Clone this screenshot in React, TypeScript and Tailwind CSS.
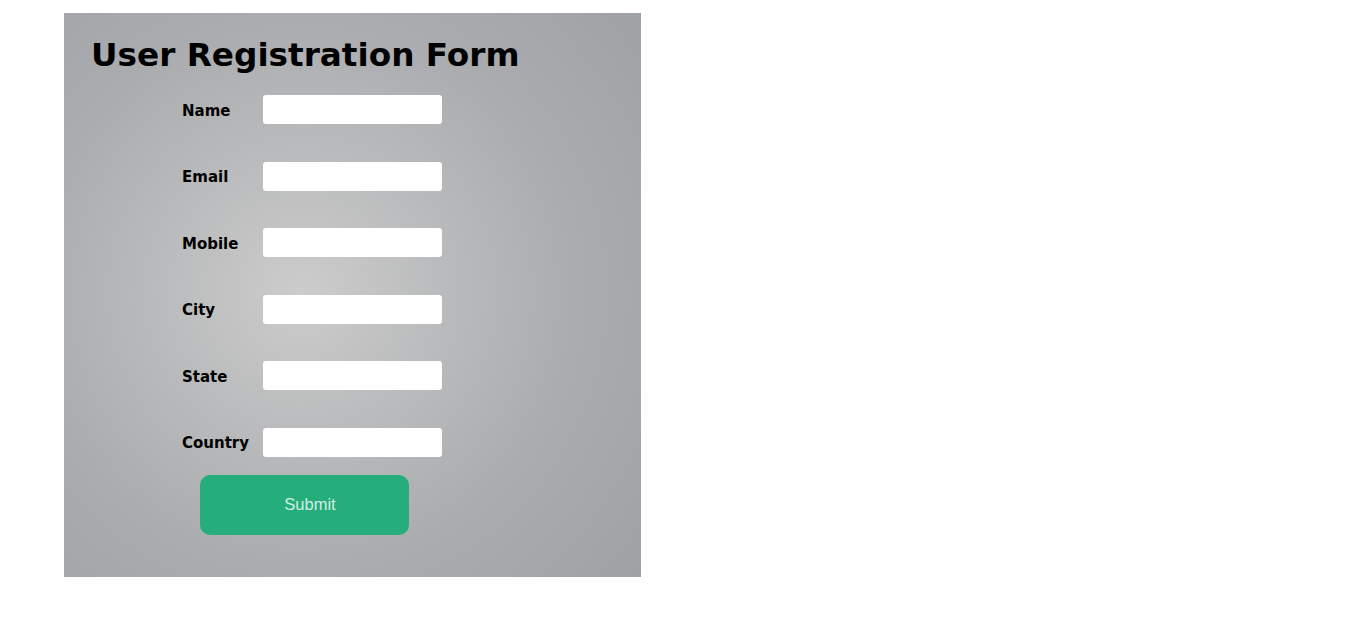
export default function App() {
  const fields = ["Name", "Email", "Mobile", "City", "State", "Country"];
  return (
    <div className="w-[1354px] h-[623px] bg-white pl-[64px] pt-[13px]">
      <div
        className="w-[577px] h-[564px] bg-[radial-gradient(circle_at_238px_280px,#cccccc_0%,#bbbcbd_30%,#aaacaf_62%,#9fa2a5_100%)]"
        style={{ fontFamily: '"DejaVu Sans", sans-serif' }}
      >
        <h1 className="pl-[27px] pt-[20px] text-[32.7px] leading-[44px] font-bold text-black">
          User Registration Form
        </h1>
        <div className="pl-[118px] pt-[18px] flex flex-col gap-[37.5px]">
          {fields.map((f) => (
            <div key={f} className="flex items-center h-[29px]">
              <span className="w-[81px] pt-[3px] text-[15px] font-bold text-black">{f}</span>
              <input className="w-[179px] h-[29px] bg-white rounded-[3px] outline-none" />
            </div>
          ))}
        </div>
        <div className="pl-[136px] pt-[18px]">
          <button
            className="w-[209px] h-[60px] rounded-[10px] bg-[#25ad7b] text-[#d3eee3] text-[16.5px] pl-[11px]"
            style={{ fontFamily: '"Liberation Sans", Arial, sans-serif' }}
          >
            Submit
          </button>
        </div>
      </div>
    </div>
  );
}
